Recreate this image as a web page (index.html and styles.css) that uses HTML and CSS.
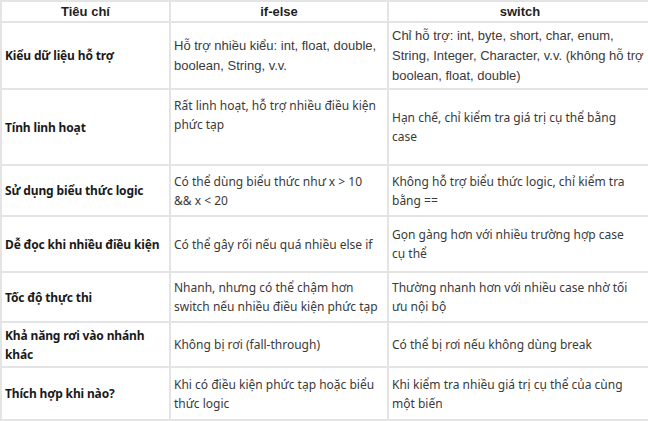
FILE: index.html
```html
<!DOCTYPE html>
<html lang="vi">
<head>
<meta charset="utf-8">
<link rel="stylesheet" href="styles.css">
</head>
<body>
<table class="cmp">
  <colgroup>
    <col class="c1"><col class="c2"><col class="c3">
  </colgroup>
  <thead>
    <tr class="h-head"><th class="hc"><div class="hcell">Tiêu chí</div></th><th class="hc"><div class="hcell">if-else</div></th><th class="hc"><div class="hcell">switch</div></th></tr>
  </thead>
  <tbody>
    <tr class="h1"><td class="k">Kiểu dữ liệu hỗ trợ</td><td class="arial">Hỗ trợ nhiều kiểu: int, float, double, boolean, String, v.v.</td><td class="arial">Chỉ hỗ trợ: int, byte, short, char, enum, String, Integer, Character, v.v. (không hỗ trợ boolean, float, double)</td></tr>
    <tr class="h2"><td class="k">Tính linh hoạt</td><td class="up">Rất linh hoạt, hỗ trợ nhiều điều kiện phức tạp</td><td>Hạn chế, chỉ kiểm tra giá trị cụ thể bằng<br>case</td></tr>
    <tr class="h3"><td class="k">Sử dụng biểu thức logic</td><td>Có thể dùng biểu thức như x &gt; 10<br>&amp;&amp; x &lt; 20</td><td>Không hỗ trợ biểu thức logic, chỉ kiểm tra bằng ==</td></tr>
    <tr class="h4"><td class="k">Dễ đọc khi nhiều điều kiện</td><td>Có thể gây rối nếu quá nhiều else if</td><td>Gọn gàng hơn với nhiều trường hợp case<br>cụ thể</td></tr>
    <tr class="h5"><td class="k">Tốc độ thực thi</td><td>Nhanh, nhưng có thể chậm hơn switch nếu nhiều điều kiện phức tạp</td><td>Thường nhanh hơn với nhiều case nhờ tối<br>ưu nội bộ</td></tr>
    <tr class="h6"><td class="k">Khả năng rơi vào nhánh khác</td><td>Không bị rơi (fall-through)</td><td>Có thể bị rơi nếu không dùng break</td></tr>
    <tr class="h7"><td class="k">Thích hợp khi nào?</td><td>Khi có điều kiện phức tạp hoặc biểu thức logic</td><td>Khi kiểm tra nhiều giá trị cụ thể của cùng một biến</td></tr>
  </tbody>
</table>
</body>
</html>
```
FILE: styles.css
```css
html, body {
  margin: 0;
  padding: 0;
  background: #ffffff;
}
.cmp {
  border-collapse: collapse;
  table-layout: fixed;
  width: 651px;
  font-family: "Noto Sans", Roboto, sans-serif;
  font-size: 12px;
  line-height: 19px;
  color: #3a3a3a;
}
.c1 { width: 169px; }
.c2 { width: 218px; }
.c3 { width: 264px; }
.cmp th, .cmp td {
  border: 2px solid #e4e4e4;
  padding: 0 3px;
  vertical-align: middle;
  text-align: left;
}
.cmp th.hc {
  font-family: "Liberation Sans", Arial, sans-serif;
  font-size: 13px;
  font-weight: bold;
  color: #1e1e1e;
}
.hcell {
  display: block;
  width: 100%;
  text-align: center;
}
.cmp td.k {
  font-weight: bold;
  color: #1a1a1a;
  letter-spacing: -0.15px;
}
.cmp td.arial {
  font-family: "Liberation Sans", Arial, sans-serif;
  font-size: 13px;
  line-height: 20px;
}
.cmp td.up {
  vertical-align: top;
  padding-top: 6px;
}
.h-head { height: 19px; }
.h1 { height: 67px; }
.h2 { height: 76px; }
.h3 { height: 51px; }
.h4 { height: 56px; }
.h5 { height: 50px; }
.h6 { height: 45px; }
.h7 { height: 53px; }
```
